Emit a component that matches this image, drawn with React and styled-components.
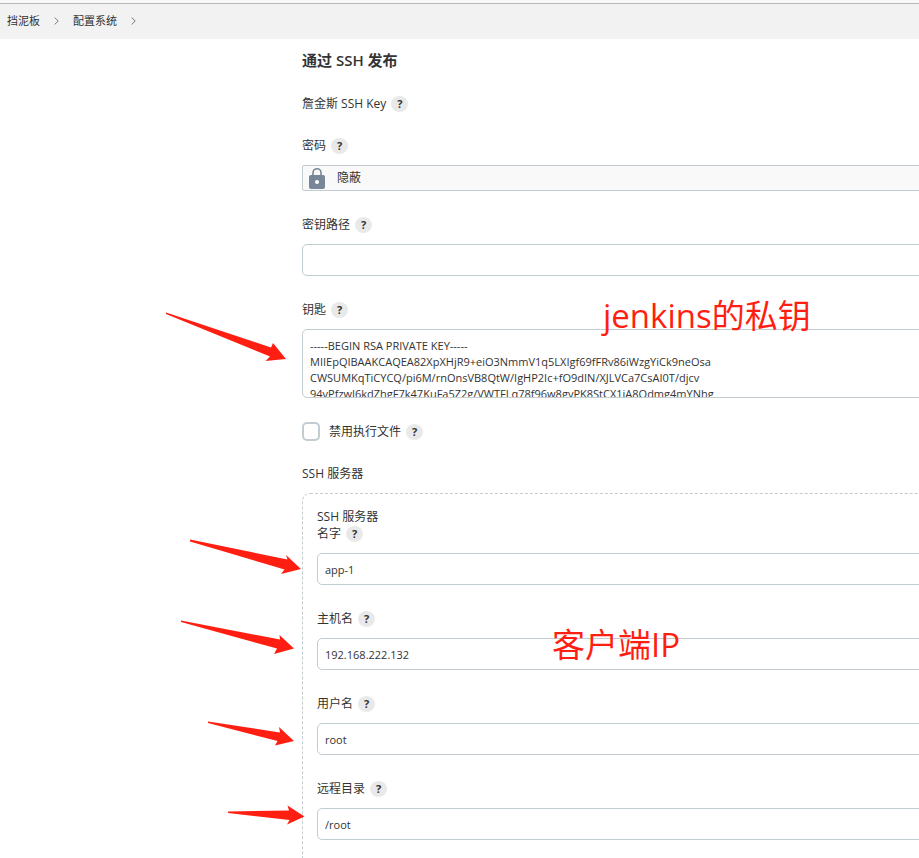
import React, { useState } from "react";
import styled, { createGlobalStyle } from "styled-components";

const PRIVATE_KEY = `-----BEGIN RSA PRIVATE KEY-----
MIIEpQIBAAKCAQEA82XpXHjR9+eiO3NmmV1q5LXIgf69fFRv86iWzgYiCk9neOsa
CWSUMKqTiCYCQ/pi6M/rnOnsVB8QtW/IgHP2Ic+fO9dIN/XJLVCa7CsAI0T/djcv
94vPfzwJ6kdZhgF7k47KuFa5Z2g/VWTFLq78f96w8gyPK8StCX1jA8Qdmg4mYNhg`;

const SERVER_FIELDS = [
  { id: "name", label: "名字" },
  { id: "hostname", label: "主机名", note: "客户端IP" },
  { id: "username", label: "用户名" },
  { id: "remoteDir", label: "远程目录" },
];

const ARROWS = [
  "M166 312.5 L271 347.5 L273 343 L286 359 L265.5 361 L270 356.5 L166 314 Z",
  "M190 539.5 L287.5 559.5 L286 555 L301 569 L281 574 L284.5 569.5 L190 541.5 Z",
  "M181 620.5 L280 639.5 L279.5 635 L294 648.5 L274 654 L277 648.5 L181 622 Z",
  "M208 721.5 L280 732.5 L279 727 L294 741 L275 745.5 L277.5 741 L208 723 Z",
  "M228 811.5 L289 810.5 L287.5 805.5 L304.5 816.5 L287 824.5 L289.5 820 L228 813 Z",
];

const Label = ({ htmlFor, children, help = true }) => (
  <LabelRow>
    <LabelText as={htmlFor ? "label" : "span"} htmlFor={htmlFor}>
      {children}
    </LabelText>
    {help && (
      <Help type="button" aria-label={`${children} 帮助`}>
        ?
      </Help>
    )}
  </LabelRow>
);

const Chevron = () => (
  <svg width="5" height="8" viewBox="0 0 5 8" fill="none" stroke="#777">
    <path d="M0.7 0.5 L4.2 4 L0.7 7.5" />
  </svg>
);

const LockIcon = () => (
  <svg width="16" height="22" viewBox="0 0 16 22">
    <path d="M4 9 V5.7 a4 4 0 0 1 8 0 V9" fill="none" stroke="#788797" strokeWidth="1.6" />
    <rect x="0" y="8" width="16" height="14" rx="2" fill="#788797" />
    <circle cx="8" cy="15" r="2" fill="#fff" />
  </svg>
);

const App = () => {
  const [keyPath, setKeyPath] = useState("");
  const [key, setKey] = useState(PRIVATE_KEY);
  const [disableExec, setDisableExec] = useState(false);
  const [server, setServer] = useState({
    name: "app-1",
    hostname: "192.168.222.132",
    username: "root",
    remoteDir: "/root",
  });

  const handleServer = (e) => {
    setServer({ ...server, [e.target.id]: e.target.value });
  };

  return (
    <Page>
      <GlobalStyle />
      <TopStrip />
      <Breadcrumb>
        <Crumb href="#">挡泥板</Crumb>
        <Chevron />
        <Crumb href="#">配置系统</Crumb>
        <Chevron />
      </Breadcrumb>

      <Form>
        <Title>通过 SSH 发布</Title>
        <Field>
          <Label>詹金斯 SSH Key</Label>
        </Field>
        <Field>
          <Label>密码</Label>
          <Concealed>
            <LockIcon />
            <span>隐蔽</span>
          </Concealed>
        </Field>
        <Field>
          <Label htmlFor="keyPath">密钥路径</Label>
          <Input id="keyPath" value={keyPath} onChange={(e) => setKeyPath(e.target.value)} />
        </Field>
        <Field>
          <Label htmlFor="key">钥匙</Label>
          <TextArea id="key" value={key} onChange={(e) => setKey(e.target.value)} />
          <Note $top={-6} $left={301}>jenkins的私钥</Note>
        </Field>
        <CheckRow>
          <Checkbox
            id="disableExec"
            type="checkbox"
            checked={disableExec}
            onChange={(e) => setDisableExec(e.target.checked)}
          />
          <Label htmlFor="disableExec">禁用执行文件</Label>
        </CheckRow>
        <Label help={false}>SSH 服务器</Label>

        <ServerBox>
          <BoxHeading>SSH 服务器</BoxHeading>
          {SERVER_FIELDS.map((field) => (
            <Field key={field.id}>
              <Label htmlFor={field.id}>{field.label}</Label>
              <Input id={field.id} value={server[field.id]} onChange={handleServer} />
              {field.note && (
                <Note $top={14} $left={235}>
                  {field.note}
                </Note>
              )}
            </Field>
          ))}
        </ServerBox>
      </Form>

      {/* 红色箭头标注 */}
      <Arrows width="310" height="830" viewBox="0 0 310 830" aria-hidden="true">
        {ARROWS.map((d) => (
          <path key={d} d={d} />
        ))}
      </Arrows>
    </Page>
  );
};

export default App;

const GlobalStyle = createGlobalStyle`
  * {
    box-sizing: border-box;
  }
  body {
    margin: 0;
    background-color: #fff;
    color: #333;
    font-family: "Open Sans", "Noto Sans CJK SC", sans-serif;
    font-size: 12px;
    line-height: 16px;
  }
  input, textarea, button {
    font: inherit;
    color: inherit;
  }
`;

const Page = styled.div`
  position: relative;
  display: flex;
  flex-direction: column;
  min-height: 100vh;
  overflow: hidden;
`;

const TopStrip = styled.div`
  height: 4px;
  background-color: #f8f8f8;
  border-bottom: 1px solid #b9b9b9;
`;

const Breadcrumb = styled.nav`
  display: flex;
  align-items: center;
  gap: 14px;
  height: 35px;
  padding: 0 7px 1px;
  background-color: #f2f2f2;
`;

const Crumb = styled.a`
  color: #333;
  font-size: 11px;
  text-decoration: none;
`;

/* 表单右侧超出窗口 */
const Form = styled.main`
  display: flex;
  flex-direction: column;
  flex: 1;
  margin-left: 302px;
  margin-right: -24px;
  padding-top: 11px;
`;

const Title = styled.h1`
  margin: 0 0 26px;
  font-size: 15px;
  line-height: 20px;
  font-weight: 600;
`;

const Field = styled.div`
  position: relative;
  display: flex;
  flex-direction: column;
  gap: 11px;
  margin-bottom: 26px;
`;

const LabelRow = styled.div`
  display: flex;
  align-items: center;
  gap: 5px;
  height: 16px;
`;

const LabelText = styled.span`
  white-space: nowrap;
`;

const Help = styled.button`
  width: 17px;
  height: 16px;
  padding: 0;
  border: none;
  border-radius: 50%;
  background-color: #e9e9e9;
  font-size: 11px;
  line-height: 16px;
  font-weight: 700;
  text-align: center;
  cursor: pointer;
`;

const Concealed = styled.div`
  display: flex;
  align-items: center;
  gap: 12px;
  height: 26px;
  padding: 0 6px;
  border: 1px solid #c3ccd1;
  border-radius: 2px;
  background-color: #f9f9f9;
`;

const Input = styled.input`
  width: 100%;
  height: 32px;
  padding: 1px 7px 0;
  border: 1px solid #c3ccd1;
  border-radius: 5px;
  background-color: #fff;
  font-size: 11px;
`;

const TextArea = styled.textarea`
  display: block;
  width: 100%;
  height: 69px;
  padding: 8px 7px;
  border: 1px solid #c3ccd1;
  border-radius: 5px;
  background-color: #fff;
  font-size: 11px;
  line-height: 16px;
  resize: none;
  overflow: hidden;
`;

const CheckRow = styled.div`
  display: flex;
  align-items: center;
  gap: 9px;
  height: 19px;
  margin: -2px 0 25px;
`;

const Checkbox = styled.input`
  appearance: none;
  width: 18px;
  height: 19px;
  margin: 0;
  border: 2px solid #c3ccd1;
  border-radius: 5px;
  background-color: #fff;

  &:checked {
    background-color: #788797;
  }
`;

const ServerBox = styled.section`
  flex: 1;
  margin-top: 11px;
  padding: 15px 14px 0;
  border: 1px dashed #c3ccd1;
  border-bottom: none;
  border-radius: 8px 8px 0 0;

  & > ${Field}:last-child {
    margin-bottom: 0;
  }
`;

const BoxHeading = styled.div`
  height: 17px;
`;

const Note = styled.span`
  position: absolute;
  top: ${(props) => props.$top}px;
  left: ${(props) => props.$left}px;
  color: #ff1f12;
  font-size: 33px;
  line-height: 40px;
  white-space: nowrap;
  pointer-events: none;
`;

const Arrows = styled.svg`
  position: absolute;
  top: 0;
  left: 0;
  fill: #ff1f12;
  pointer-events: none;
`;
